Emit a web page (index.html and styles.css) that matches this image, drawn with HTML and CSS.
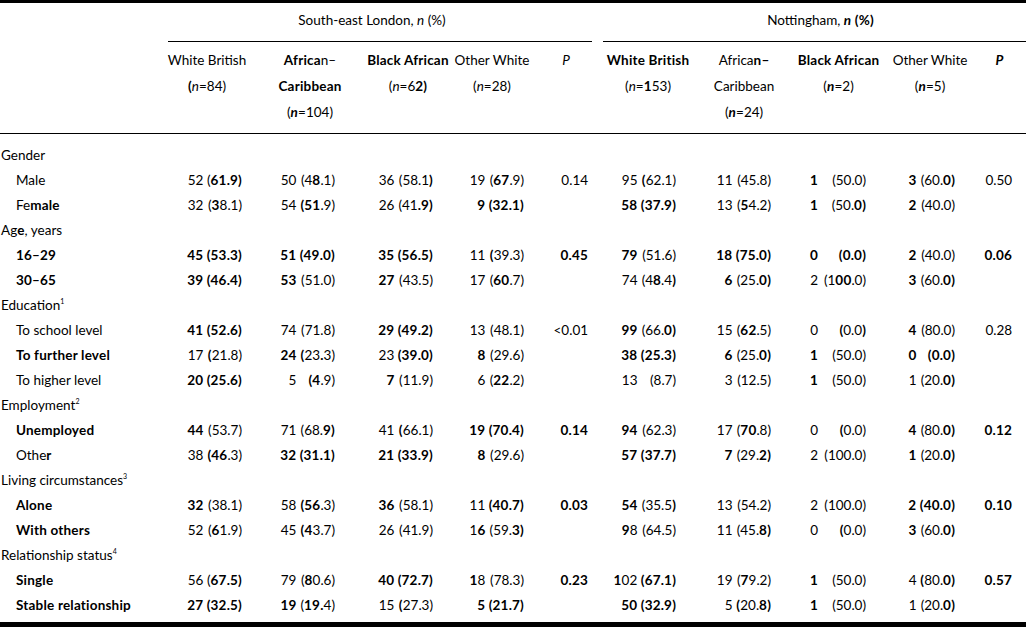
FILE: index.html
```html
<!DOCTYPE html>
<html>
<head>
<meta charset="utf-8">
<link rel="stylesheet" href="styles.css">
</head>
<body>
<table class="tbl">
  <colgroup>
    <col class="w-label"><col class="w-c1"><col class="w-c2"><col class="w-c3"><col class="w-c4"><col class="w-p1">
    <col class="w-c6"><col class="w-c7"><col class="w-c8"><col class="w-c9"><col class="w-p2">
  </colgroup>
  <thead>
    <tr class="h-group">
      <th></th>
      <th colspan="5"><div class="grp-line grp-se">South-east London, <i>n</i> (%)</div></th>
      <th colspan="5"><div class="grp-line grp-nt">Nottingham, <b><i>n</i> (%)</b></div></th>
    </tr>
    <tr class="h-cols">
      <th></th>
      <th>White British<br><b>(</b><i>n</i>=84)</th>
      <th><b>Africa</b>n–<br><b>Caribbean</b><br>(<b><i>n</i></b>=104)</th>
      <th><b>Black African</b><br>(<i>n</i>=6<b>2)</b></th>
      <th>Other White<br>(<i>n</i>=28)</th>
      <th><i>P</i></th>
      <th><b>White British</b><br>(<i>n</i>=<b>1</b>53)</th>
      <th>Africa<b>n–</b><br>Caribbean<br>(<b><i>n</i></b>=24)</th>
      <th><b>Black African</b><br>(<b><i>n</i></b>=2)</th>
      <th>Other White<br>(<b><i>n</i></b>=5)</th>
      <th><b><i>P</i></b></th>
    </tr>
  </thead>
  <tbody>
    <tr class="grp first"><td colspan="11">Gender</td></tr>
    <tr>
      <td class="sub">Male</td>
      <td>52 <span class="p">(<b>61.9)</b></span></td>
      <td>50 <span class="p">(4<b>8</b>.1)</span></td>
      <td>36 <span class="p">(58.1<b>)</b></span></td>
      <td>19 <span class="p">(<b>67</b>.9)</span></td>
      <td>0.14</td>
      <td>95 <span class="p"><b>(</b>62.1)</span></td>
      <td>11 <span class="p">(45.8)</span></td>
      <td><b>1</b> <span class="p">(50.0)</span></td>
      <td><b>3</b> <span class="p">(60.<b>0)</b></span></td>
      <td>0.50</td>
    </tr>
    <tr>
      <td class="sub">Fe<b>male</b></td>
      <td>32 <span class="p">(<b>3</b>8.1)</span></td>
      <td>54 <span class="p"><b>(51</b>.9)</span></td>
      <td>26 <span class="p">(41<b>.9)</b></span></td>
      <td><b>9</b> <span class="p"><b>(32.1)</b></span></td>
      <td></td>
      <td><b>58</b> <span class="p"><b>(37.9)</b></span></td>
      <td>13 <span class="p">(<b>5</b>4.2)</span></td>
      <td><b>1</b> <span class="p">(50.<b>0)</b></span></td>
      <td><b>2</b> <span class="p">(40.0)</span></td>
      <td></td>
    </tr>
    <tr class="grp"><td colspan="11">Ag<b>e</b>, years</td></tr>
    <tr>
      <td class="sub"><b>16–29</b></td>
      <td><b>45</b> <span class="p"><b>(53.3)</b></span></td>
      <td><b>51</b> <span class="p"><b>(49.0)</b></span></td>
      <td><b>35</b> <span class="p"><b>(56.5)</b></span></td>
      <td>11 <span class="p"><b>(</b>39.3)</span></td>
      <td><b>0.45</b></td>
      <td><b>79</b> <span class="p">(51.6)</span></td>
      <td><b>18</b> <span class="p"><b>(75.0)</b></span></td>
      <td><b>0</b> <span class="p"><b>(0.0)</b></span></td>
      <td><b>2</b> <span class="p">(40.0)</span></td>
      <td><b>0.06</b></td>
    </tr>
    <tr>
      <td class="sub"><b>30–65</b></td>
      <td><b>39</b> <span class="p"><b>(46.4)</b></span></td>
      <td><b>53</b> <span class="p">(51.0)</span></td>
      <td><b>27</b> <span class="p">(43.5)</span></td>
      <td>17 <span class="p">(<b>60</b>.7)</span></td>
      <td></td>
      <td>74 <span class="p">(4<b>8</b>.4<b>)</b></span></td>
      <td><b>6</b> <span class="p">(25.<b>0)</b></span></td>
      <td>2 <span class="p">(1<b>00</b>.0)</span></td>
      <td><b>3</b> <span class="p">(60.<b>0)</b></span></td>
      <td></td>
    </tr>
    <tr class="grp"><td colspan="11">Education<sup>1</sup></td></tr>
    <tr>
      <td class="sub">To school level</td>
      <td><b>41</b> <span class="p"><b>(52.6)</b></span></td>
      <td>74 <span class="p">(71.8)</span></td>
      <td><b>29</b> <span class="p"><b>(49.2)</b></span></td>
      <td>13 <span class="p">(48.1)</span></td>
      <td>&lt;0.01</td>
      <td><b>99</b> <span class="p">(66.<b>0)</b></span></td>
      <td>15 <span class="p">(<b>62</b>.5)</span></td>
      <td>0 <span class="p"><b>(</b>0.0<b>)</b></span></td>
      <td><b>4</b> <span class="p">(80.0)</span></td>
      <td>0.28</td>
    </tr>
    <tr>
      <td class="sub"><b>To further level</b></td>
      <td>17 <span class="p"><b>(</b>21.8)</span></td>
      <td><b>24</b> <span class="p"><b>(</b>23<b>.</b>3)</span></td>
      <td>23 <span class="p"><b>(39.0)</b></span></td>
      <td><b>8</b> <span class="p">(29.6)</span></td>
      <td></td>
      <td><b>38</b> <span class="p"><b>(25.3)</b></span></td>
      <td><b>6</b> <span class="p">(25.<b>0)</b></span></td>
      <td><b>1</b> <span class="p">(50.0)</span></td>
      <td><b>0</b> <span class="p"><b>(0.0)</b></span></td>
      <td></td>
    </tr>
    <tr>
      <td class="sub">To higher level</td>
      <td><b>20</b> <span class="p"><b>(25.6)</b></span></td>
      <td>5 <span class="p"><b>(4</b>.9)</span></td>
      <td><b>7</b> <span class="p">(11.9)</span></td>
      <td>6 <span class="p">(<b>22</b>.2)</span></td>
      <td></td>
      <td>13 <span class="p">(8.7)</span></td>
      <td>3 <span class="p">(12.5)</span></td>
      <td><b>1</b> <span class="p">(50.0)</span></td>
      <td>1 <span class="p">(20.<b>0)</b></span></td>
      <td></td>
    </tr>
    <tr class="grp"><td colspan="11">Employment<sup>2</sup></td></tr>
    <tr>
      <td class="sub"><b>Unemployed</b></td>
      <td><b>44</b> <span class="p">(53.7)</span></td>
      <td>71 <span class="p">(68.<b>9)</b></span></td>
      <td>41 <span class="p"><b>(</b>66.1)</span></td>
      <td><b>19</b> <span class="p"><b>(70.4)</b></span></td>
      <td><b>0.14</b></td>
      <td><b>94</b> <span class="p">(62.3)</span></td>
      <td>17 <span class="p">(<b>70</b>.8)</span></td>
      <td>0 <span class="p"><b>(</b>0.0)</span></td>
      <td><b>4</b> <span class="p">(80.<b>0)</b></span></td>
      <td><b>0.12</b></td>
    </tr>
    <tr>
      <td class="sub">Othe<b>r</b></td>
      <td>38 <span class="p"><b>(46</b>.3)</span></td>
      <td><b>32</b> <span class="p"><b>(31.1)</b></span></td>
      <td><b>21</b> <span class="p"><b>(33.9)</b></span></td>
      <td><b>8</b> <span class="p">(29.6)</span></td>
      <td></td>
      <td><b>57</b> <span class="p"><b>(37.7)</b></span></td>
      <td><b>7</b> <span class="p">(29.<b>2)</b></span></td>
      <td>2 <span class="p">(100.0)</span></td>
      <td><b>1</b> <span class="p">(20.<b>0)</b></span></td>
      <td></td>
    </tr>
    <tr class="grp"><td colspan="11">Living circumstances<sup>3</sup></td></tr>
    <tr>
      <td class="sub"><b>Alone</b></td>
      <td><b>32</b> <span class="p">(38.1)</span></td>
      <td>58 <span class="p"><b>(56</b>.3)</span></td>
      <td><b>36</b> <span class="p">(58.1)</span></td>
      <td>11 <span class="p"><b>(40.7)</b></span></td>
      <td><b>0.03</b></td>
      <td><b>54</b> <span class="p">(35.5<b>)</b></span></td>
      <td>13 <span class="p">(54.2)</span></td>
      <td>2 <span class="p">(100.0)</span></td>
      <td><b>2</b> <span class="p"><b>(40.0)</b></span></td>
      <td><b>0.10</b></td>
    </tr>
    <tr>
      <td class="sub"><b>With others</b></td>
      <td>52 <span class="p">(<b>6</b>1.9)</span></td>
      <td>45 <span class="p"><b>(4</b>3.7)</span></td>
      <td>26 <span class="p">(41.9)</span></td>
      <td>1<b>6</b> <span class="p">(59.<b>3)</b></span></td>
      <td></td>
      <td><b>9</b>8 <span class="p">(64.5)</span></td>
      <td>11 <span class="p">(45.<b>8)</b></span></td>
      <td>0 <span class="p"><b>(</b>0.0)</span></td>
      <td><b>3</b> <span class="p">(60.<b>0)</b></span></td>
      <td></td>
    </tr>
    <tr class="grp"><td colspan="11">Relationship status<sup>4</sup></td></tr>
    <tr>
      <td class="sub"><b>Single</b></td>
      <td>56 <span class="p">(<b>67.5)</b></span></td>
      <td>79 <span class="p">(<b>8</b>0.6)</span></td>
      <td><b>40</b> <span class="p"><b>(72.7)</b></span></td>
      <td><b>1</b>8 <span class="p">(78.3)</span></td>
      <td><b>0.23</b></td>
      <td><b>1</b>02 <span class="p"><b>(67.1)</b></span></td>
      <td>19 <span class="p">(<b>7</b>9.2)</span></td>
      <td><b>1</b> <span class="p">(50.0)</span></td>
      <td>4 <span class="p"><b>(</b>80.<b>0)</b></span></td>
      <td><b>0.57</b></td>
    </tr>
    <tr class="last">
      <td class="sub"><b>Stable relationship</b></td>
      <td><b>27</b> <span class="p"><b>(32.5)</b></span></td>
      <td><b>19</b> <span class="p">(<b>19.</b>4)</span></td>
      <td>15 <span class="p"><b>(</b>27.3)</span></td>
      <td><b>5</b> <span class="p"><b>(21.7)</b></span></td>
      <td></td>
      <td><b>50</b> <span class="p"><b>(32.9)</b></span></td>
      <td>5 <span class="p"><b>(</b>20.<b>8)</b></span></td>
      <td><b>1</b> <span class="p">(50.0)</span></td>
      <td>1 <span class="p">(20.<b>0)</b></span></td>
      <td></td>
    </tr>
  </tbody>
</table>
</body>
</html>
```
FILE: styles.css
```css
html, body {
  margin: 0;
  padding: 0;
  background: #fff;
}
body {
  font-family: Lato, "Open Sans", "Liberation Sans", sans-serif;
  font-size: 13.5px;
  color: #000;
}
.tbl {
  width: 1026px;
  table-layout: fixed;
  border-collapse: separate;
  border-spacing: 0;
  border-top: 3px solid #000;
  border-bottom: 5px solid #000;
}
.w-label { width: 160px; }
.w-c1 { width: 94px; }
.w-c2 { width: 112px; }
.w-c3 { width: 84px; }
.w-c4 { width: 84px; }
.w-p1 { width: 64px; }
.w-c6 { width: 100px; }
.w-c7 { width: 92px; }
.w-c8 { width: 97px; }
.w-c9 { width: 86px; }
.w-p2 { width: 53px; }

th {
  font-weight: 400;
  padding: 0;
  white-space: nowrap;
}
b { font-weight: 700; letter-spacing: 0.2px; }

.h-group th {
  vertical-align: bottom;
}
.grp-line {
  padding: 4px 0 8px;
  line-height: 26px;
  border-bottom: 1px solid #000;
  text-align: center;
}
.grp-se {
  margin: 0 6px 0 8px;
  padding-right: 16px;
}
.grp-nt {
  margin-left: 5px;
  padding-left: 12px;
}
.h-cols th {
  vertical-align: top;
  text-align: center;
  line-height: 26px;
  padding: 5px 0 8px;
  border-bottom: 1px solid #000;
}

td {
  padding: 0;
  line-height: 25px;
  height: 25px;
  text-align: right;
  white-space: nowrap;
  vertical-align: bottom;
}
.grp td {
  text-align: left;
  padding-left: 1px;
}
td.sub {
  text-align: left;
  padding-left: 16px;
}
sup {
  font-size: 7px;
  line-height: 0;
  vertical-align: 6px;
}
.first td { padding-top: 9px; }
.last td { padding-bottom: 4px; }

.p {
  display: inline-block;
  min-width: 2.6em;
  text-align: right;
}

tbody td:nth-child(2) { padding-right: 12px; }
tbody td:nth-child(3) { padding-right: 31px; }
tbody td:nth-child(4) { padding-right: 17px; }
tbody td:nth-child(5) { padding-right: 10px; }
tbody td:nth-child(6) { padding-right: 10px; }
tbody td:nth-child(7) { padding-right: 22px; }
tbody td:nth-child(8) { padding-right: 19px; }
tbody td:nth-child(9) { padding-right: 21px; }
tbody td:nth-child(10) { padding-right: 18px; }
tbody td:nth-child(11) { padding-right: 14px; }
tbody td:nth-child(9) .p { min-width: 3.3em; }
```
